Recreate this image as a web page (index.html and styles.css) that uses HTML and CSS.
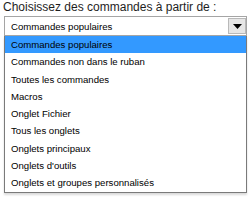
FILE: index.html
```html
<!DOCTYPE html>
<html lang="fr">
<head>
  <meta charset="UTF-8" />
  <title>Choisissez des commandes</title>
  <link rel="stylesheet" href="styles.css">
</head>
<body>
  <div class="picker">
    <label class="picker-label">Choisissez des commandes à partir de :</label>
    <div class="combo">
      <span class="combo-value">Commandes populaires</span>
      <span class="combo-btn">
        <svg width="9" height="5" viewBox="0 0 9 5"><path d="M0 0 H9 L4.5 5 Z" fill="#000"/></svg>
      </span>
    </div>
    <ul class="options">
      <li class="selected">Commandes populaires</li>
      <li>Commandes non dans le ruban</li>
      <li>Toutes les commandes</li>
      <li>Macros</li>
      <li>Onglet Fichier</li>
      <li>Tous les onglets</li>
      <li>Onglets principaux</li>
      <li>Onglets d'outils</li>
      <li>Onglets et groupes personnalisés</li>
    </ul>
  </div>
</body>
</html>
```
FILE: styles.css
```css
* { margin: 0; padding: 0; box-sizing: border-box; }
body {
  font-family: "Liberation Sans", Arial, sans-serif;
  background: #fff; color: #000;
  width: 250px; height: 200px; overflow: hidden;
}
.picker { padding: 0 3px 0 4px; }
.picker-label {
  display: block; font-size: 12px; line-height: 15px;
  margin-left: -1px; color: #1e1e1e;
}
.combo {
  display: flex; align-items: center; justify-content: space-between;
  height: 20px; margin-top: 1px;
  border: 1px solid #a5a5a5; background: #fff;
}
.combo-value { font-size: 9.6px; padding-left: 6px; }
.combo-btn {
  display: flex; align-items: center; justify-content: center;
  width: 18px; height: 16px; margin-right: 0;
  background: #e6e6e6; border: 1px solid #b9b9b9;
}
.options {
  list-style: none; border: 1px solid #7a7a7a; border-top: none;
  box-shadow: 0 2px 2px rgba(0,0,0,0.15);
}
.options li {
  font-size: 9.6px; line-height: 17.3px; height: 17.3px;
  padding-left: 6px; white-space: nowrap;
}
.options li.selected { background: #3399ff; color: #000; }
```
